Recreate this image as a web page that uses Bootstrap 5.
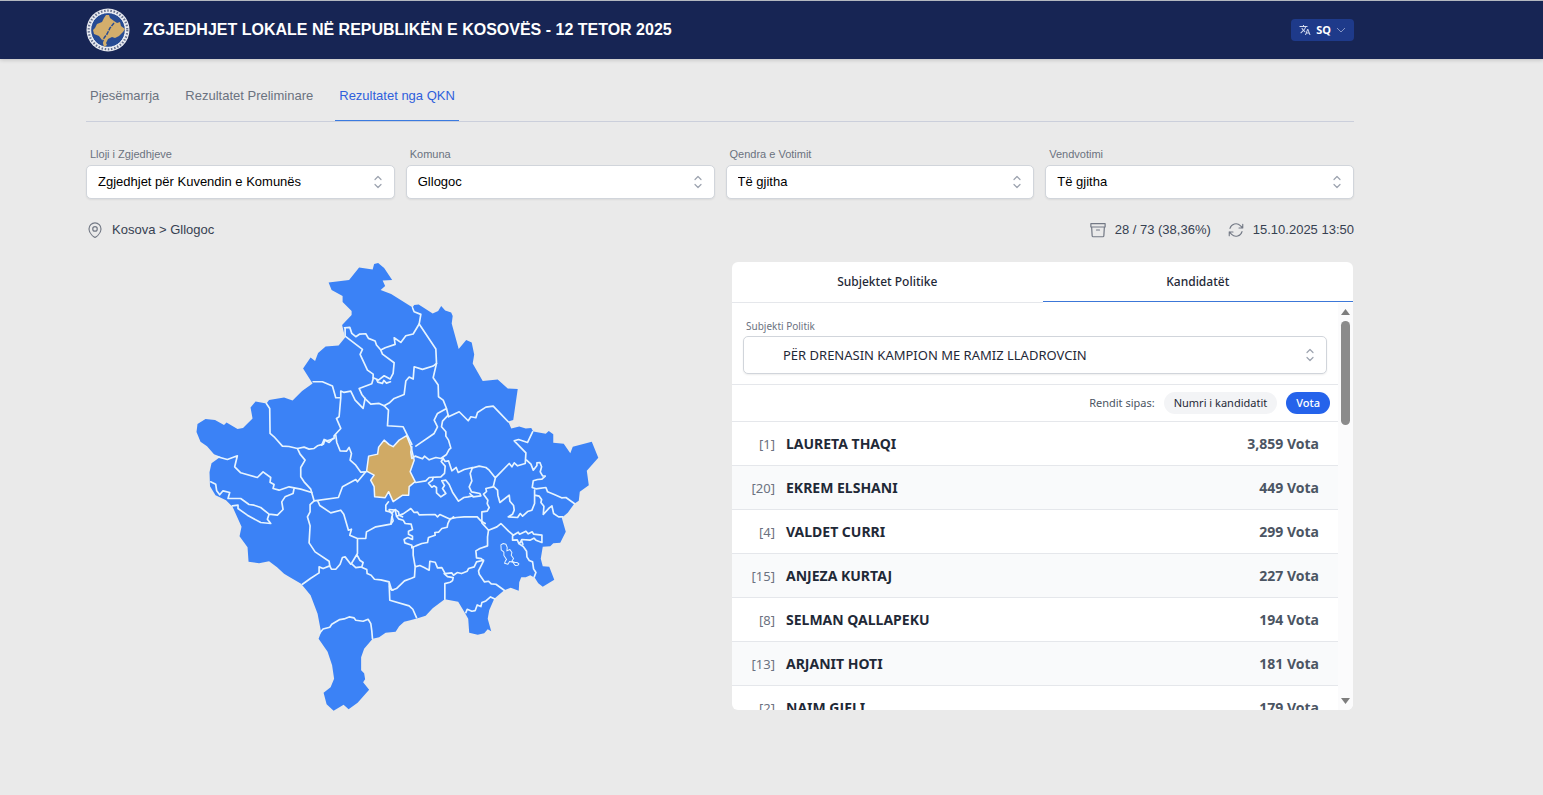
<!DOCTYPE html>
<html lang="sq">
<head>
<meta charset="utf-8">
<meta name="viewport" content="width=device-width, initial-scale=1">
<title>Zgjedhjet Lokale 2025</title>
<link href="https://cdn.jsdelivr.net/npm/bootstrap@5.3.0/dist/css/bootstrap.min.css" rel="stylesheet">
<style>
  body { background: #eaeaea; color: #374151; font: 13px/20px "Liberation Sans", Arial, sans-serif; }
  .page-wrap { max-width: 1440px; padding-left: 86px; padding-right: 86px; }
  .site-head { background: #172554; border-top: 1px solid #b4b8c0; height: 59px; box-shadow: 0 1px 4px rgba(0,0,0,.18); }
  .site-head .page-wrap { height: 100%; }
  .site-title { font-size: 16px; line-height: 24px; font-weight: 700; color: #fff; margin-left: 13px; }
  .lang-btn { background: #1e3a8a; color: #fff; font: 700 11px/16px "Noto Sans", sans-serif; height: 22px; padding: 0 8px; border-radius: 4px; gap: 5px; }
  .lang-btn:hover { background: #24459f; color: #fff; }
  .page-tabs { border-bottom: 1px solid #cbcfdb; gap: 18px; margin-top: 17px; }
  .page-tabs .nav-link { color: #6b7280; padding: 10px 4px 14px; border-bottom: 1px solid transparent; }
  .page-tabs .nav-link.active { color: #2f5fdc; border-bottom-color: #3b7be0; }
  .filters { --bs-gutter-x: 11px; margin-top: 24px; }
  .filters label, .party-label { display: block; font-size: 11px; line-height: 16px; color: #6b7280; padding-left: 4px; }
  .picker { color: #000; background-color: #fff; border: 1px solid #d1d5db; border-radius: 5px; height: 34px; font-size: 13px; line-height: 18px; padding: 0 32px 0 11px; box-shadow: 0 1px 2px rgba(0,0,0,.07);
    background-image: url("data:image/svg+xml,%3Csvg xmlns='http://www.w3.org/2000/svg' viewBox='0 0 12 16' fill='none' stroke='%239ca3af' stroke-width='1.2' stroke-linecap='round' stroke-linejoin='round'%3E%3Cpath d='M3 5.500 6 2.500l3 3M3 10.500 6 13.500l3-3'/%3E%3C/svg%3E");
    background-position: right 10px center; background-size: 12px 16px; }
  .filters label { margin-bottom: 3px; }
  .status-bar { margin-top: 21px; }
  .status-bar svg { stroke: #737985; }
  .results { --bs-gutter-x: 24px; margin-top: 22px; }
  .kosovo-map { display: block; width: 65%; margin: 0 auto; }
  .panel { background: #fff; border-radius: 6px; height: 448px; margin-right: 1px; overflow: hidden; font-family: "Noto Sans", sans-serif; }
  .panel-tabs .nav-link { height: 41px; background: none; color: #1f2937; font-size: 12px; font-weight: 500; padding: 0; border: 0; border-bottom: 1px solid #e5e7eb; border-radius: 0; }
  .panel-tabs .nav-link.active { height: 40px; border-bottom-color: #3c77d8; }
  .scroll-view { min-height: 0; overflow-y: auto; scrollbar-width: none; }
  .scroll-view::-webkit-scrollbar { display: none; }
  .party-box { padding: 15px 11px 10px; }
  .party-label { margin-bottom: 2px; font-size: 10px; padding-left: 3px; }
  .party-box .picker { height: 38px; padding-left: 39px; color: #1f2937; }
  .sort-bar { height: 37px; border-top: 1px solid #e5e7eb; padding-right: 8px; gap: 9px; font-size: 11px; line-height: 16px; color: #4b5563; }
  .pill { border: 0; border-radius: 11px; font-size: 11px; line-height: 16px; padding: 3px 10px; background: #f3f4f6; color: #1f2937; }
  .pill.on { background: #2563eb; color: #fff; font-weight: 500; }
  .votes { width: 100%; border-collapse: collapse; }
  .votes td { height: 44px; padding: 0; border-top: 1px solid #e5e7eb; font-size: 14px; line-height: 20px; }
  .votes tr:nth-child(even) { background: #f9fafb; }
  .votes .num { width: 43px; text-align: right; color: #6b7280; font-size: 13px; }
  .votes .who { padding-left: 11px; font-weight: 700; color: #1f2937; }
  .votes .tally { padding-right: 19px; text-align: right; font-weight: 700; color: #4b5563; }
  .track { width: 15px; background: #fbfbfc; padding: 6px 0; flex: none; }
  .track .thumb { width: 9px; height: 104px; border-radius: 5px; background: #8b8b8b; margin-top: 6px; }
</style>
</head>
<body>
<header class="site-head">
  <div class="page-wrap d-flex align-items-center">
    <svg width="44" height="44" viewBox="0 0 44 44" role="img" aria-label="KQZ">
      <circle cx="22" cy="22" r="21.500" fill="#e8eaf0"/>
      <circle cx="22" cy="22" r="19.300" fill="none" stroke="#66718f" stroke-width="2.200" stroke-dasharray="1.500 1.700"/>
      <circle cx="22" cy="22" r="17.300" fill="#274b93" stroke="#fff" stroke-width=".8"/>
      <path d="M20 7l3 0 1 3 4 3 3 2 3-1 1 4 4 3-2 3-4 4-4 2-3-1-4 2-2 4 1 2-3 2-2-7-3-4-5-2-1-4 2-2 2-4 5-2 2-4z" fill="#d3ae6c"/>
      <path d="M28 15l-4 5-3 6-3 4-2 5" fill="none" stroke="#274b93" stroke-width="1.500" stroke-dasharray="4 1"/>
    </svg>
    <span class="site-title me-auto">ZGJEDHJET LOKALE NË REPUBLIKËN E KOSOVËS - 12 TETOR 2025</span>
    <button type="button" class="btn lang-btn border-0 d-flex align-items-center">
      <svg width="12" height="12" viewBox="0 0 24 24" fill="#d5dcf0" aria-hidden="true"><path d="M12.870 15.070l-2.540-2.510.030-.030A17.520 17.520 0 0 0 14.070 6H17V4h-7V2H8v2H1v2h11.170C11.500 7.920 10.440 9.750 9 11.350 8.070 10.320 7.300 9.190 6.690 8h-2c.730 1.630 1.730 3.170 2.980 4.560l-5.090 5.020L4 19l5-5 3.110 3.110.760-2.040zM18.500 10h-2L12 22h2l1.120-3h4.750L21 22h2l-4.500-12zm-2.620 7l1.620-4.330L19.120 17h-3.240z"/></svg>
      SQ
      <svg width="10" height="8" viewBox="0 0 10 8" fill="none" stroke="#8796c4" aria-hidden="true"><path d="M1 2l4 4 4-4"/></svg>
    </button>
  </div>
</header>
<main class="page-wrap">
  <nav class="nav page-tabs">
    <a class="nav-link" href="#">Pjesëmarrja</a>
    <a class="nav-link" href="#">Rezultatet Preliminare</a>
    <a class="nav-link active" href="#" aria-current="page">Rezultatet nga QKN</a>
  </nav>

  <form class="row row-cols-4 filters">
    <div class="col"><label for="lloji">Lloji i Zgjedhjeve</label><select class="form-select picker" id="lloji"><option>Zgjedhjet për Kuvendin e Komunës</option></select></div>
    <div class="col"><label for="komuna">Komuna</label><select class="form-select picker" id="komuna"><option>Gllogoc</option></select></div>
    <div class="col"><label for="qendra">Qendra e Votimit</label><select class="form-select picker" id="qendra"><option>Të gjitha</option></select></div>
    <div class="col"><label for="vend">Vendvotimi</label><select class="form-select picker" id="vend"><option>Të gjitha</option></select></div>
  </form>

  <div class="status-bar d-flex align-items-center gap-2">
    <svg width="18" height="18" viewBox="0 0 24 24" fill="none" stroke-width="1.600" stroke-linejoin="round" aria-hidden="true"><circle cx="12" cy="10.500" r="3"/><path d="M20 10.500c0 7-8 11.500-8 11.500s-8-4.500-8-11.500a8 8 0 0 1 16 0z"/></svg>
    <span class="me-auto">Kosova &gt; Gllogoc</span>
    <svg width="18" height="18" viewBox="0 0 24 24" fill="none" stroke-width="1.600" stroke-linecap="round" stroke-linejoin="round" aria-hidden="true"><path d="M3.500 8l.7 11.500a1.500 1.500 0 0 0 1.500 1.500h12.600a1.500 1.500 0 0 0 1.500-1.500L20.500 8M10 12h4M2.500 3.500h19V8h-19z"/></svg>
    <span>28 / 73 (38,36%)</span>
    <svg class="ms-2" width="18" height="18" viewBox="0 0 24 24" fill="none" stroke-width="1.500" stroke-linecap="round" stroke-linejoin="round" aria-hidden="true"><path d="M16 9.300h5V4.400M3 19.600v-5h5M3 14.600l3.200 3.200a8.200 8.200 0 0 0 13.800-3.700M4 9.900a8.200 8.200 0 0 1 13.800-3.700L21 9.300"/></svg>
    <span>15.10.2025 13:50</span>
  </div>

  <div class="row results">
    <div class="col-6">
      <svg class="kosovo-map" viewBox="588 786 1212 1347" role="img" aria-label="Harta e komunave të Kosovës">
        <g transform="scale(3)">
          <path fill="#3b82f6" d="M375 264L379 263L385 268L393 280L383.500 280.500L386 286L381.500 290L392 294L413.500 307.500L415 305L419.500 304.500L433.500 313.500L439 311L442 306L446 310.500L452 312.500L453.500 316L452.500 323.500L459.500 349L467 340L472.500 342.500L475 354.500L473.500 363.500L483.500 381L498.500 379.500L508.500 388.500L518.500 389L514 420L509 421.500L512 428.500L520 426.500L526.500 428.500L532 428L534 431.500L546.500 433.500L549.500 431L554 434V442.500L564.500 443.500L571 453L573.500 446.500L592.500 441.500L599 457.500L587.500 470.500L589.500 485L580.500 491.500L579.500 500.500L575 503.500L568.500 512.500L562.500 517.500L566.500 531.500L561 542.500L554 543L551 546L543.500 546.500L541.500 558.500L543.500 566L550 566.500L555 579.500L543.500 586.500L539 583L535.500 577.500L531 575L526.500 577L522 577L520 582L519.500 590.500L511.500 587.500L505 590L495 598.500L490 610L488.500 618.500L492 631L488.500 629L485 633L478.500 634.500L470 632.500L469 618.500L465 611.500L459 601.500L445.500 599L433.500 608L426.500 615.500L418.500 618L411 620L405 621.500L400 626L396.500 631.500L386.500 632.500L380 637L373.500 638.500L365 648.500L362 657V670L365 673L366 679L364 682L370 689.500L358.500 702.500L349.500 709L344.500 704.500L334.500 710.500L327.500 704L324.500 692.500L331.500 687L335 678.500L333 665L328.500 651.500L319.500 638.500L322 632L318.500 613.500L311.500 595L302 583.500L290 576.500L285 573.500L278 567L270 561L260 563L249.500 561.500L248.500 547L240.500 536L242.500 526.500L233.500 506.500L227 500L216.500 495L211 486L210.500 472L212.500 463L221.500 456.500L215 454L208 446L201.500 441.500L197.500 432L198.500 424L206.500 419L216 420L225 425L227.500 422.500L238.500 429L244 428L253.500 418.500L251.500 407.500L256.500 401.500L267.500 403.500L270 400L285 397.500L293.500 400.500L303 391L313.500 383.500L304 368.500L311.500 357.500L316 361L319 353L326.500 346.500L339.500 345.500L346 337.500L343 325L352.500 315V311L343.500 302V296L332.500 290L329.500 282.500L350 280L360 267.500L373.500 269.500z"/>
          <path fill="#d0aa65" stroke="#eef6ff" stroke-width="1.500" stroke-linejoin="round" d="M385 440L390 444.500L394 446.500L400 440L407.500 435.500L412 447L415 460L411 471.500L416 481.500L410 486.500L409.500 495L403.500 495L394 501.500L389.500 491.500L386 497.500L375.500 496.500L375 486.500L371.500 480L375 475L367.500 471L369.500 456L378.500 454L379.500 447z"/>
        </g>
        <g fill="none" stroke="#e6f4ff" stroke-width="5" stroke-linejoin="round" stroke-linecap="round">
          <!-- northern municipalities -->
          <g transform="translate(870 765)">
            <path d="M166 218L182 217L188 235L200 245L212 237L230 236L238 250L258 258L262 270L275 285L288 278L318 268L315 248L335 262L350 242L372 237L390 207L395 178L375 170L370 158"/>
            <path d="M168 218V243L220 283L213 298L235 345L252 357V372L248 386L210 400L218 418L230 433L245 447L270 445L285 452L300 444L315 430L345 418L350 378L360 366L372 372L375 335L400 343L432 333L442 325"/>
            <path d="M275 285L280 297L315 323L312 355L303 372L285 362L268 375L252 368M262 372L266 381L280 385L284 376L292 384L304 380M390 207L440 282L442 325L432 368L447 390L448 425L462 435L472 460L478 485M72 380L100 380L130 393L140 428H155V408L165 412L185 408L198 435L222 460L228 430M155 428L150 485L142 490L155 520L135 542V550L115 557L105 553L98 570M285 452L298 465L295 512L342 515L368 568M472 460L445 475L435 495L445 515L435 535L380 573M478 485L510 470L537 497L545 485L560 488L565 472L590 456L612 453L635 477L657 500"/>
          </g>
          <!-- western municipalities -->
          <g transform="translate(570 1140)">
            <path d="M232 70L242 85L243 160L255 170L280 198L300 199L325 205L345 201L360 207L375 205L385 197L403 192L407 180L420 187L432 175M440 165L443 187L453 212L472 213L480 202L487 220L483 240L500 255L515 276L530 275M325 205L333 222L348 240L335 262V290L345 305L365 327L375 362"/>
            <path d="M85 230L115 238L145 227L137 260L155 278L205 292L222 275L245 292L243 306L255 313L252 325L270 330L300 320L335 327L368 337M315 325L312 340L288 350L278 365L282 388L265 405L240 402M65 305L80 312L83 332L92 344L102 332L122 337L117 355L155 355L180 373L195 375L215 382L240 402L235 417L245 430L215 427L175 405L147 385V375L130 377"/>
            <path d="M375 362L448 352L460 320L500 298L505 305L530 275M375 362L363 373V395L355 410L363 437L360 488L378 515L420 543L422 557M386 362L392 376L425 398L455 390L464 402L478 450L487 447L482 465L505 475H530L532 455L560 440L605 432L608 410M598 365L590 375V392L610 397L618 388L628 395L630 405L640 410M505 475V520L487 550L500 562L518 560L522 547L512 540L504 525"/>
            <path d="M340 612L365 594L390 578V560L402 565L422 557L427 567L440 567L453 552L460 532L468 530L485 552M519 562L533 568L534 580L546 585L556 597L575 599L600 605L606 625L611 630"/>
          </g>
          <!-- eastern municipalities -->
          <g transform="translate(1170 1140)">
            <path d="M68 200L65 216L68 235L78 228L100 236L106 228L120 239L140 232L155 235L172 223L180 208L185 204L178 180L170 168V155L157 140L160 123L177 105M162 235L156 244L168 258L166 280L155 290L120 292L110 302L80 307M162 235L168 244L178 242L184 260L188 272L201 262L207 277L225 268L250 262L243 280L248 302L240 320L247 335L272 340L275 347L252 350L242 340"/>
            <path d="M250 263L270 258L290 262L300 270L318 293L360 250L368 260L375 248L385 257L408 250L410 218L375 182L388 178L415 187L430 155M412 240L425 252L432 270L443 256V248L452 247L457 260L453 275L460 287L468 288L458 297L445 298L432 302L429 322L440 326L470 322L475 335L495 343L517 353L530 352L555 370M318 295L312 320L290 325L292 334L283 342L296 360L294 370L300 382L294 393L278 395V428L298 450M312 318L325 330L326 345L332 367L360 345L362 363L373 376L375 390L370 402L357 410L385 412L393 400L400 408L415 394L428 390L436 370V330M436 345L450 348L457 358L455 367L464 378L462 403L480 383L488 377L493 400L508 410H520"/>
            <path d="M132 292L130 300L118 309L128 321L135 317L142 322V338L155 350L170 340L160 325L166 316L158 302L170 300L180 313L190 336L208 363L224 352L236 350L250 347M0 388L18 390L22 408L42 401L65 385L75 397L85 396L90 404L138 403L145 410L152 403L180 416L202 412L225 410H264L275 422L288 430M22 408L28 416L42 420L48 430L66 432L70 448L58 453V462L70 468V478L56 472L45 478L47 488L68 495V503L80 497L98 490L115 487L118 472L138 465L137 457L148 456L158 445L174 441L176 430L181 420L193 410M0 392L10 402L9 410L12 422L5 432"/>
            <path d="M72 500V525L78 560L76 590L67 594L46 602L22 625L8 630L0 620M78 560L92 556L105 562L120 570L122 543L138 546L145 563L158 562L168 580L188 578L193 585L204 577L217 580L234 573L238 565L255 560L262 545L283 540M298 450L295 470V497L272 505L260 512L262 533L276 535L283 542L268 572L270 582L286 605L298 603L306 611L320 612L345 630M298 450L323 440L335 430L358 453L372 465L387 456L391 462L410 453L417 461L429 455L433 462L458 465V487L440 480L434 474L422 480L398 478L390 491L402 499L412 513L413 530L420 541L430 545L433 566L440 577L435 590M370 466V480L384 479L389 490L397 482L401 492M165 580L175 589L192 592L190 601L183 606L167 610L167 657M230 697L234 687L248 693L258 691L264 674L275 679L278 667L290 662L304 650L317 656M0 610L2 660L60 677L71 687L82 712"/>
            <path stroke-width="3" d="M335 494L342 490L350 492L354 502L353 512L362 508L368 517L366 525L373 535L368 543L377 547H384L389 551L386 555L378 556L371 546L361 544L356 552L346 549L349 541L352 538L344 526V516L336 509z"/>
          </g>
          <!-- southern municipality -->
          <g transform="translate(870 1680)">
            <path d="M92 218L102 206L122 201L128 192L152 178L165 176L180 170L195 173L200 180L222 183L237 177L245 190L248 212L250 235"/>
          </g>
        </g>
      </svg>
    </div>
    <div class="col-6">
      <section class="panel d-flex flex-column">
        <div class="nav nav-fill panel-tabs flex-nowrap" role="tablist">
          <button type="button" class="nav-link w-50" role="tab" aria-selected="false">Subjektet Politike</button>
          <button type="button" class="nav-link w-50 active" role="tab" aria-selected="true">Kandidatët</button>
        </div>
        <div class="d-flex flex-grow-1 overflow-hidden">
          <div class="scroll-view flex-grow-1">
            <div class="party-box">
              <label class="party-label" for="subjekti">Subjekti Politik</label>
              <select class="form-select picker" id="subjekti"><option>PËR DRENASIN KAMPION ME RAMIZ LLADROVCIN</option></select>
            </div>
            <div class="sort-bar d-flex align-items-center justify-content-end">
              <span>Rendit sipas:</span>
              <button type="button" class="pill">Numri i kandidatit</button>
              <button type="button" class="pill on">Vota</button>
            </div>
            <table class="votes">
              <tbody>
                <tr><td class="num">[1]</td><td class="who">LAURETA THAQI</td><td class="tally">3,859 Vota</td></tr>
                <tr><td class="num">[20]</td><td class="who">EKREM ELSHANI</td><td class="tally">449 Vota</td></tr>
                <tr><td class="num">[4]</td><td class="who">VALDET CURRI</td><td class="tally">299 Vota</td></tr>
                <tr><td class="num">[15]</td><td class="who">ANJEZA KURTAJ</td><td class="tally">227 Vota</td></tr>
                <tr><td class="num">[8]</td><td class="who">SELMAN QALLAPEKU</td><td class="tally">194 Vota</td></tr>
                <tr><td class="num">[13]</td><td class="who">ARJANIT HOTI</td><td class="tally">181 Vota</td></tr>
                <tr><td class="num">[2]</td><td class="who">NAIM GJELI</td><td class="tally">179 Vota</td></tr>
              </tbody>
            </table>
          </div>
          <div class="track d-flex flex-column align-items-center" aria-hidden="true">
            <svg width="9" height="6" viewBox="0 0 9 6" fill="#7d7d7d"><path d="M4.500 0L9 6H0z"/></svg>
            <div class="thumb"></div>
            <svg class="mt-auto" width="9" height="6" viewBox="0 0 9 6" fill="#7d7d7d"><path d="M0 0h9L4.500 6z"/></svg>
          </div>
        </div>
      </section>
    </div>
  </div>
</main>
<script src="https://cdn.jsdelivr.net/npm/bootstrap@5.3.0/dist/js/bootstrap.bundle.min.js"></script>
</body>
</html>
